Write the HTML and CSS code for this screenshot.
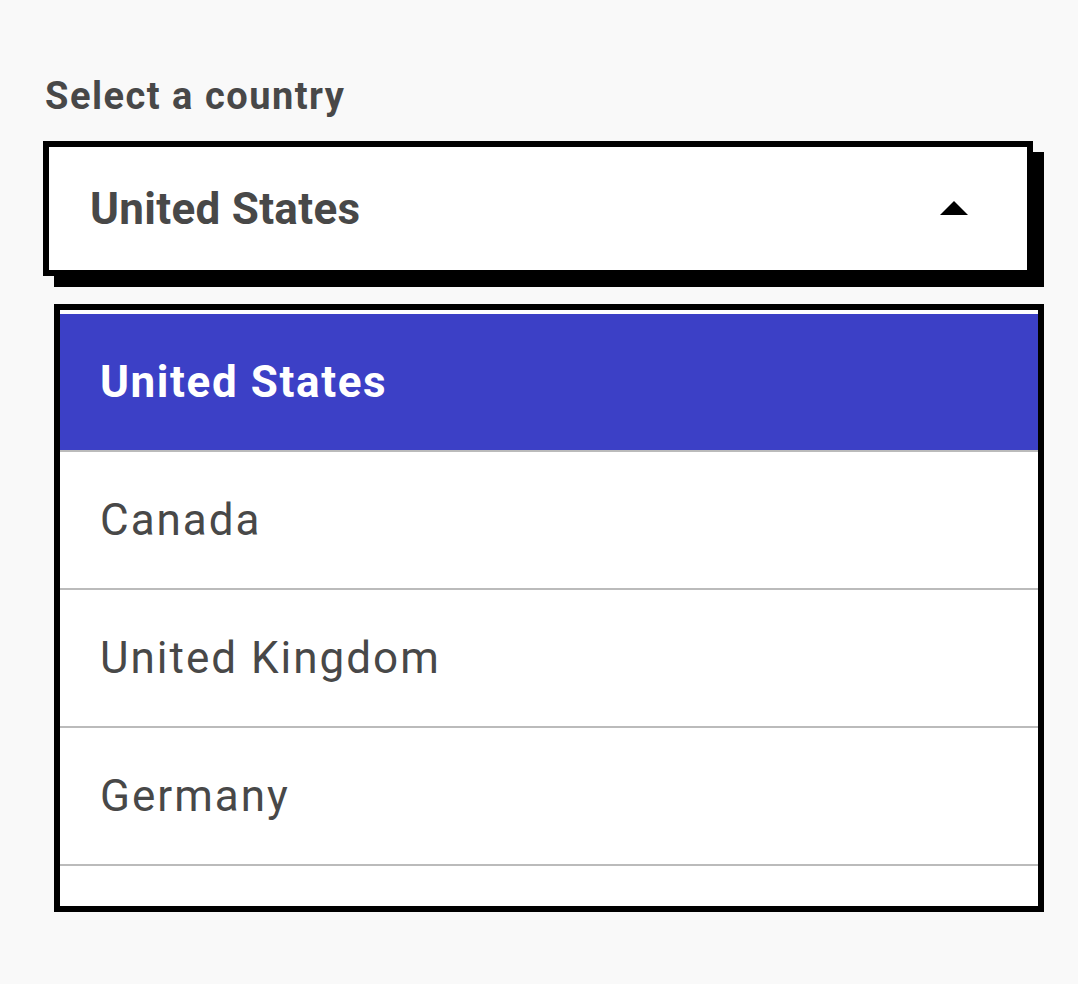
FILE: index.html
```html
<!DOCTYPE html>
<html lang="en">
<head>
<meta charset="utf-8">
<title>Select a country</title>
<link rel="stylesheet" href="styles.css">
</head>
<body>
<main class="field">
  <label class="field-label" id="country-label">Select a country</label>
  <div class="select" role="combobox" aria-expanded="true" aria-labelledby="country-label">
    <span class="select-value">United States</span>
    <svg class="select-arrow" width="28" height="14" viewBox="0 0 28 14" aria-hidden="true"><path d="M14 0 L28 14 L0 14 Z" fill="#000"/></svg>
  </div>
  <ul class="listbox" role="listbox">
    <li class="option selected" role="option" aria-selected="true">United States</li>
    <li class="option" role="option">Canada</li>
    <li class="option" role="option">United Kingdom</li>
    <li class="option" role="option">Germany</li>
    <li class="option" role="option" aria-hidden="true"></li>
  </ul>
</main>
</body>
</html>
```

FILE: styles.css
```css
html, body {
  margin: 0;
  padding: 0;
  background: #f9f9f9;
}

body {
  font-family: Roboto, "Noto Sans", sans-serif;
  color: #484848;
}

.field {
  display: flex;
  flex-direction: column;
  align-items: flex-start;
  padding: 74px 0 0 43px;
}

.field-label {
  font-size: 38px;
  font-weight: 700;
  letter-spacing: 1.5px;
  line-height: 44px;
  margin-left: 2px;
}

.select {
  box-sizing: border-box;
  width: 990px;
  height: 135px;
  margin-top: 23px;
  border: 6px solid #000;
  background: #fff;
  box-shadow: 11px 11px 0 #000;
  display: flex;
  align-items: center;
  justify-content: space-between;
  padding: 0 59px 0 41px;
}

.select-value {
  font-size: 44px;
  font-weight: 700;
  letter-spacing: 0.3px;
  line-height: 1;
}

.select-arrow {
  display: block;
  margin-top: -2px;
}

.listbox {
  box-sizing: border-box;
  list-style: none;
  margin: 28px 0 0 11px;
  padding: 4px 0 0;
  width: 990px;
  height: 608px;
  border: 6px solid #000;
  background: #fff;
  overflow: hidden;
}

.option {
  box-sizing: border-box;
  height: 138px;
  flex: none;
  border-bottom: 2px solid #bbbbbb;
  display: flex;
  align-items: center;
  padding-left: 40px;
  font-size: 44px;
  letter-spacing: 2px;
  color: #484848;
}

.option.selected {
  background: #3c40c6;
  color: #fff;
  font-weight: 700;
  font-size: 44px;
  letter-spacing: 1.6px;
}
```
